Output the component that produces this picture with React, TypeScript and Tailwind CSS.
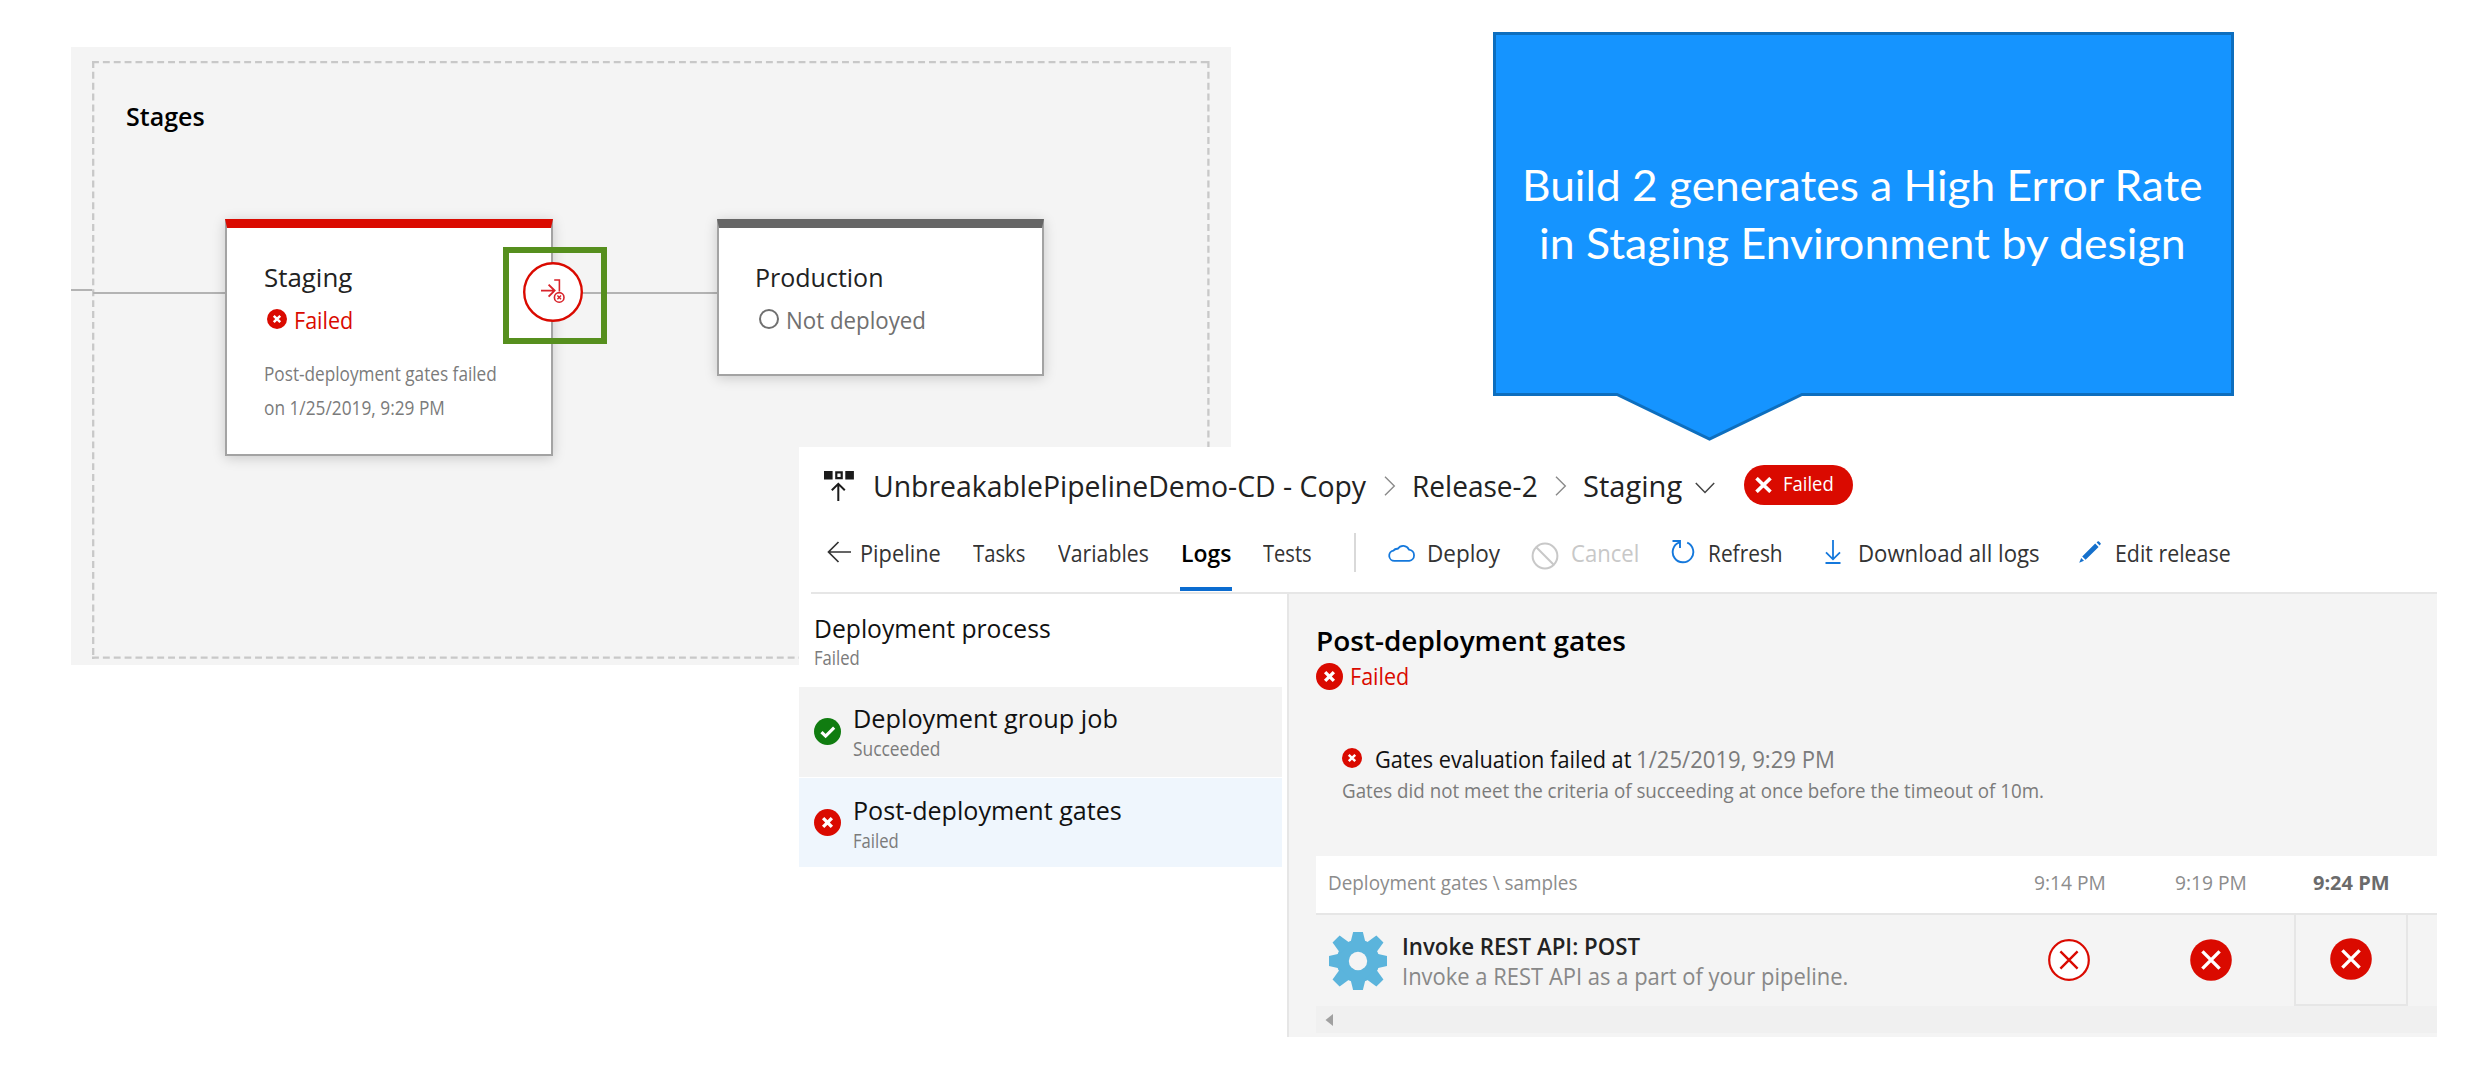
import { useLayoutEffect, useRef, useState } from 'react';
import type { ReactNode } from 'react';

/** One line of text condensed or widened horizontally so that it fills its box. */
function Fit({ className = '', children }: { className?: string; children: ReactNode }) {
  const inner = useRef<HTMLSpanElement>(null);
  const [scale, setScale] = useState(1);
  useLayoutEffect(() => {
    const el = inner.current;
    if (el && el.parentElement) setScale(el.parentElement.clientWidth / el.offsetWidth);
  }, []);
  return (
    <div className={`shrink-0 whitespace-nowrap ${className}`}>
      <span ref={inner} className="inline-block origin-left whitespace-pre" style={{ transform: `scaleX(${scale})` }}>
        {children}
      </span>
    </div>
  );
}

function FailedIcon({ className }: { className: string }) {
  return (
    <svg viewBox="0 0 26 26" className={`shrink-0 ${className}`}>
      <circle cx="13" cy="13" r="13" fill="#da0a00" />
      <path d="M8.8 8.8l8.4 8.4M17.2 8.8l-8.4 8.4" stroke="#fff" strokeWidth="3.2" />
    </svg>
  );
}

function SuccessIcon({ className }: { className: string }) {
  return (
    <svg viewBox="0 0 26 26" className={`shrink-0 ${className}`}>
      <circle cx="13" cy="13" r="13" fill="#107c10" />
      <path d="M7.2 13.6l4 3.9 8.2-8.2" fill="none" stroke="#fff" strokeWidth="3" />
    </svg>
  );
}

function SampleIcon({ outlined = false }: { outlined?: boolean }) {
  return (
    <svg viewBox="0 0 42 42" className="size-[42px]">
      {outlined ? (
        <circle cx="21" cy="21" r="19.8" fill="#fff" stroke="#da0a00" strokeWidth="2.2" />
      ) : (
        <circle cx="21" cy="21" r="20.8" fill="#da0a00" />
      )}
      <path
        d="M12.4 12.4l17.2 17.2M29.6 12.4L12.4 29.6"
        stroke={outlined ? '#da0a00' : '#fff'}
        strokeWidth={outlined ? 2.4 : 3.4}
      />
    </svg>
  );
}

function Gear() {
  return (
    <svg viewBox="-29 -29 58 58" className="h-[58px] w-[58px] shrink-0">
      <circle r="21.5" fill="#5bb4dc" />
      {[0, 90, 180, 270].map((a) => (
        <path key={a} transform={`rotate(${a})`} d="M-7.6-18L-4.9-29H4.9L7.6-18z" fill="#5bb4dc" />
      ))}
      {[45, 135, 225, 315].map((a) => (
        <path key={a} transform={`rotate(${a})`} d="M-7-18L-5-31H5L7-18z" fill="#5bb4dc" />
      ))}
      <circle r="9.2" fill="#f4f4f4" />
    </svg>
  );
}

function Chevron({ className }: { className: string }) {
  return (
    <svg viewBox="0 0 12 20" className={`h-5 w-3 shrink-0 ${className}`} fill="none" stroke="#8a8a8a" strokeWidth="1.4">
      <path d="M1 .8L10.3 10 1 19.2" />
    </svg>
  );
}

function StagesPanel() {
  return (
    <section className="absolute left-[71px] top-[47px] h-[618px] w-[1160px] bg-[#f4f4f4]">
      <svg
        viewBox="0 0 1118 598"
        className="absolute left-[21px] top-[14px] h-[598px] w-[1118px]"
        fill="none"
        stroke="#c8c8c8"
        strokeWidth="2.3"
        strokeDasharray="6.9 3.97"
      >
        <path d="M0 1.2H1118M0 596.6H1118M1.2 0V598M1116.4 0V598" />
      </svg>
      <Fit className="absolute left-[55px] top-[54px] w-[79px] text-[25px] font-semibold leading-[30px] text-black">Stages</Fit>

      <div className="absolute left-0 top-[242px] h-[2px] w-[21px] bg-[#b3b3b3]" />
      <div className="absolute left-[22px] top-[245px] h-[2px] w-[624px] bg-[#b3b3b3]" />

      <article className="absolute left-[154px] top-[172px] flex h-[237px] w-[328px] flex-col border-2 border-t-[9px] border-[#a3a3a3] border-t-[#da0a00] bg-white pl-[36px] pt-[34px] shadow-[0_2px_12px_rgba(0,0,0,0.18)]">
        <Fit className="ml-px w-[88px] text-[25px] leading-[30px] text-[#222]">Staging</Fit>
        <div className="mt-[13px] flex h-[30px] items-start">
          <FailedIcon className="ml-[4px] mt-[4px] size-5" />
          <Fit className="ml-[7px] w-[59px] text-[23.4px] leading-[30px] text-[#da0a00]">Failed</Fit>
        </div>
        <Fit className="ml-px mt-[24px] w-[233px] text-[19.2px] leading-[30px] text-[#7b7b7b]">Post-deployment gates failed</Fit>
        <Fit className="ml-px mt-[4px] w-[181px] text-[19.2px] leading-[30px] text-[#7b7b7b]">on 1/25/2019, 9:29 PM</Fit>
      </article>

      <article className="absolute left-[646px] top-[172px] flex h-[157px] w-[327px] flex-col border-2 border-t-[9px] border-[#a3a3a3] border-t-[#666] bg-white pl-[36px] pt-[34px] shadow-[0_2px_12px_rgba(0,0,0,0.18)]">
        <Fit className="w-[129px] text-[25px] leading-[30px] text-[#222]">Production</Fit>
        <div className="mt-[13px] flex h-[30px] items-start">
          <div className="ml-[4px] mt-[4px] size-5 rounded-full border-2 border-[#707070]" />
          <Fit className="ml-[7px] w-[140px] text-[23.4px] leading-[30px] text-[#707070]">Not deployed</Fit>
        </div>
      </article>

      <svg viewBox="0 0 60 60" className="absolute left-[452px] top-[215px] size-[60px]" fill="none" stroke="#d8232a">
        <circle cx="30" cy="30" r="28.8" fill="#fff" stroke="#da0a00" strokeWidth="2.4" />
        <path d="M18 28.6h13.4M25.6 22.6l6 6-6 6" strokeWidth="1.9" />
        <path d="M31.2 18h5.2v11.5" strokeWidth="1.6" />
        <circle cx="36.2" cy="35.4" r="4.8" strokeWidth="1.6" />
        <path d="M34.4 33.6l3.6 3.6M38 33.6l-3.6 3.6" strokeWidth="1.4" />
      </svg>
      <div className="absolute left-[432px] top-[200px] h-[97px] w-[104px] border-[6px] border-[#568f1e]" />
    </section>
  );
}

function Callout() {
  return (
    <section className="absolute left-[1493px] top-[31px] h-[411px] w-[742px]">
      <svg viewBox="0 0 742 411" className="absolute inset-0 h-full w-full">
        <path
          d="M1.5 2.5H739.5V363.5H309L216.5 408 124 363.5H1.5z"
          fill="#1594ff"
          stroke="#0d6ebe"
          strokeWidth="3"
        />
      </svg>
      <div className="relative flex flex-col items-center pr-[3px] pt-[125px] font-[Lato,sans-serif] text-[42.5px] leading-[58px] text-white">
        <Fit className="w-[681px]">Build 2 generates a High Error Rate</Fit>
        <Fit className="w-[647px]">in Staging Environment by design</Fit>
      </div>
    </section>
  );
}

function Header() {
  return (
    <div className="flex h-[62px] items-start">
      <svg viewBox="0 0 32 32" className="ml-[24px] mt-[23px] size-8 shrink-0" fill="none">
        <path d="M1 1h8.6v8.4H1zM22.3 1h8.6v8.4h-8.6z" fill="#1b1b1b" />
        <path d="M13.3 2.3h5.4v5.8h-5.4z" stroke="#1b1b1b" strokeWidth="2.2" />
        <path d="M15.3 31V14M8.8 20.3l6.5-6.5 6.5 6.5" stroke="#1b1b1b" strokeWidth="2" />
      </svg>
      <Fit className="ml-[18px] mt-[19px] w-[493px] text-[28.5px] leading-[40px] text-[#222]">UnbreakablePipelineDemo-CD - Copy</Fit>
      <Chevron className="ml-[18px] mt-[29px]" />
      <Fit className="ml-[16px] mt-[19px] w-[126px] text-[28.5px] leading-[40px] text-[#222]">Release-2</Fit>
      <Chevron className="ml-[17px] mt-[29px]" />
      <Fit className="ml-[16px] mt-[19px] w-[99px] text-[28.5px] leading-[40px] text-[#222]">Staging</Fit>
      <svg viewBox="0 0 20 12" className="ml-[13px] mt-[35px] h-3 w-5 shrink-0" fill="none" stroke="#444" strokeWidth="1.5">
        <path d="M.8 1L10 10.4 19.2 1" />
      </svg>
      <div className="ml-[29px] mt-[18px] flex h-[40px] w-[109px] shrink-0 items-start rounded-full bg-[#da0a00]">
        <svg viewBox="0 0 18 16" className="ml-[11px] mt-[12px] h-4 w-[18px] shrink-0" stroke="#fff" strokeWidth="3.6">
          <path d="M1.5 1.2l14 13.6M15.5 1.2l-14 13.6" />
        </svg>
        <Fit className="ml-[10px] mt-[4px] w-[51px] text-[19.2px] font-medium leading-[30px] text-white">Failed</Fit>
      </div>
    </div>
  );
}

function Toolbar() {
  return (
    <div className="ml-[12px] flex h-[85px] w-[1626px] items-start border-b-2 border-[#e6e6e6] pt-[29px] text-[23.4px] leading-[30px] text-[#333]">
      <svg viewBox="0 0 24 22" className="ml-[16px] mt-[3px] h-[22px] w-6 shrink-0" fill="none" stroke="#333" strokeWidth="1.7">
        <path d="M24 11H1.5M11.5 1l-10 10 10 10" />
      </svg>
      <Fit className="ml-[9px] w-[81px]">Pipeline</Fit>
      <Fit className="ml-[32px] w-[52px]">Tasks</Fit>
      <Fit className="ml-[33px] w-[91px]">Variables</Fit>
      <div className="ml-[31px] mt-[-29px] flex h-[82px] w-[52px] shrink-0 flex-col items-center justify-between">
        <Fit className="mt-[29px] w-[50px] font-semibold text-black">Logs</Fit>
        <div className="h-[4px] w-full bg-[#0b6cd0]" />
      </div>
      <Fit className="ml-[31px] w-[49px]">Tests</Fit>
      <div className="ml-[42px] mt-[-5px] h-[39px] w-[2px] shrink-0 bg-[#d9d9d9]" />
      <svg viewBox="0 0 28 18" className="ml-[32px] mt-[6px] h-[18px] w-7 shrink-0" fill="none" stroke="#1478dc" strokeWidth="1.8">
        <path d="M6.5 16.9A5.2 5.2 0 0 1 5.4 6.6 5 5 0 0 1 9.8 4.8 6.4 6.4 0 0 1 21 5.6 5.7 5.7 0 0 1 21.2 16.9z" />
      </svg>
      <Fit className="ml-[11px] w-[73px]">Deploy</Fit>
      <svg viewBox="0 0 28 28" className="ml-[31px] mt-[4px] size-7 shrink-0" fill="none" stroke="#c8c8c8" strokeWidth="2">
        <path d="M4.8 4.8l18.4 18.4" />
        <circle cx="14" cy="14" r="12.4" />
      </svg>
      <Fit className="ml-[12px] w-[68px] text-[#c8c8c8]">Cancel</Fit>
      <svg viewBox="0 0 24 26" className="ml-[32px] mt-[1px] h-[26px] w-6 shrink-0" fill="none" stroke="#1478dc" strokeWidth="1.9">
        <path d="M1.5 2H9v7M8.3 3.4A10.3 10.3 0 1 0 16.2 3.6" />
      </svg>
      <Fit className="ml-[13px] w-[75px]">Refresh</Fit>
      <svg viewBox="0 0 18 24" className="ml-[41px] mt-[2px] h-6 w-[18px] shrink-0" fill="none" stroke="#1478dc" strokeWidth="1.8">
        <path d="M9 0v19M2 12.3l7 7 7-7M1.5 23h15" />
      </svg>
      <Fit className="ml-[16px] w-[182px]">Download all logs</Fit>
      <svg viewBox="0 0 24 24" className="ml-[38px] mt-[2px] size-6 shrink-0" fill="#1570cc">
        <path d="M4.2 16.4L17.2 3.6l3.4 3.4L7.6 19.8zM18.6 2.4l1.3-1.2c.6-.5 3.4 2 2.9 2.8l-1.2 1.5zM3.2 18l2.8 2.8-4.8 2z" />
      </svg>
      <Fit className="ml-[13px] w-[116px]">Edit release</Fit>
    </div>
  );
}

function Sidebar() {
  const title = 'text-[25px] leading-[30px] text-[#111]';
  const sub = 'text-[19.2px] leading-[26px] text-[#7b7b7b]';
  return (
    <aside className="w-[490px] shrink-0 border-r-2 border-[#e6e6e6] pr-[5px]">
      <div className="h-[93px] pl-[15px] pt-[19px]">
        <Fit className={`w-[237px] ${title}`}>Deployment process</Fit>
        <Fit className={`mt-[2px] w-[46px] ${sub}`}>Failed</Fit>
      </div>
      <div className="flex h-[90px] bg-[#f3f3f3] pl-[15px] pt-[16px]">
        <SuccessIcon className="mt-[15px] size-[27px]" />
        <div className="ml-[12px]">
          <Fit className={`w-[265px] ${title}`}>Deployment group job</Fit>
          <Fit className={`mt-[3px] w-[87px] ${sub}`}>Succeeded</Fit>
        </div>
      </div>
      <div className="mt-px flex h-[89px] bg-[#eff6fd] pl-[15px] pt-[17px]">
        <FailedIcon className="mt-[14px] size-[27px]" />
        <div className="ml-[12px]">
          <Fit className={`w-[269px] ${title}`}>Post-deployment gates</Fit>
          <Fit className={`mt-[3px] w-[46px] ${sub}`}>Failed</Fit>
        </div>
      </div>
    </aside>
  );
}

function GatesView() {
  return (
    <main className="flex h-[443px] w-[1148px] flex-col bg-[#f4f4f4] pl-[27px]">
      <Fit className="mt-[27px] w-[310px] text-[27.5px] font-semibold leading-[40px] text-black">Post-deployment gates</Fit>
      <div className="flex h-[29px] items-start">
        <FailedIcon className="mt-[2px] size-[27px]" />
        <Fit className="ml-[7px] w-[59px] text-[23.4px] leading-[30px] text-[#da0a00]">Failed</Fit>
      </div>
      <div className="ml-[26px] mt-[54px] flex h-[30px] items-start text-[23px] leading-[30px]">
        <FailedIcon className="mt-[4px] size-5" />
        <Fit className="ml-[13px] w-[256px] text-[#111]">Gates evaluation failed at</Fit>
        <Fit className="ml-[5px] w-[199px] text-[#7b7b7b]">1/25/2019, 9:29 PM</Fit>
      </div>
      <Fit className="ml-[26px] mt-[2px] w-[702px] text-[19.2px] leading-[30px] text-[#7b7b7b]">
        Gates did not meet the criteria of succeeding at once before the timeout of 10m.
      </Fit>

      <div className="mt-[50px] flex h-[59px] shrink-0 items-start border-b-2 border-[#e6e6e6] bg-white pt-[12px] text-[19.2px] leading-[30px] text-[#8c8c8c]">
        <Fit className="ml-[12px] w-[249px]">Deployment gates \ samples</Fit>
        <Fit className="ml-[457px] w-[72px]">9:14 PM</Fit>
        <Fit className="ml-[69px] w-[72px]">9:19 PM</Fit>
        <Fit className="ml-[66px] w-[77px] font-bold text-[#6b6b6b]">9:24 PM</Fit>
      </div>
      <div className="flex h-[91px] shrink-0 items-start">
        <div className="ml-[13px] mt-[17px]">
          <Gear />
        </div>
        <div className="ml-[15px] mt-[16px] text-[23px] leading-[30px]">
          <Fit className="w-[238px] font-[550] text-[#222]">Invoke REST API: POST</Fit>
          <Fit className="w-[446px] text-[#888]">Invoke a REST API as a part of your pipeline.</Fit>
        </div>
        <div className="ml-[200px] mt-[24px]">
          <SampleIcon outlined />
        </div>
        <div className="ml-[100px] mt-[24px]">
          <SampleIcon />
        </div>
        <div className="ml-[62px] flex h-[91px] w-[114px] justify-center border-2 border-t-0 border-[#e6e6e6] pt-[23px]">
          <SampleIcon />
        </div>
      </div>
      <div className="flex h-[27px] shrink-0 items-center bg-[#f0f0f0] pl-[9px]">
        <svg viewBox="0 0 8 12" className="h-3 w-2">
          <path d="M8 0v12L.5 6z" fill="#a0a0a0" />
        </svg>
      </div>
    </main>
  );
}

export default function App() {
  return (
    <div className="relative h-[1065px] w-[2467px] overflow-hidden bg-white font-['Open_Sans',sans-serif] font-[370]">
      <StagesPanel />
      <Callout />
      <section className="absolute left-[799px] top-[447px] h-[590px] w-[1638px] bg-white">
        <Header />
        <Toolbar />
        <div className="flex">
          <Sidebar />
          <GatesView />
        </div>
      </section>
    </div>
  );
}
